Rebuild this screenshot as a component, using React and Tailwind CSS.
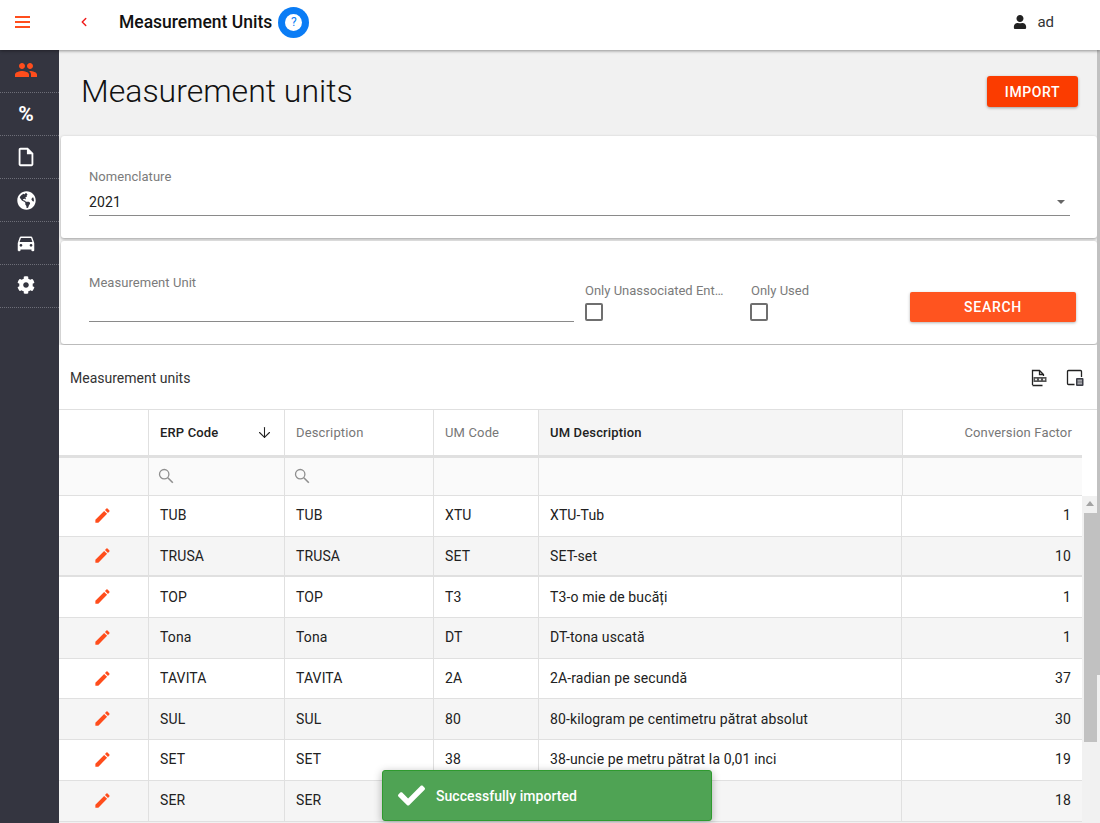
import { ArrowDown, ChevronLeft } from 'lucide-react';
import { FaCheck, FaCog, FaGlobeAmericas, FaUser } from 'react-icons/fa';
import { MdDirectionsCar, MdEdit, MdOutlineInsertDriveFile, MdPeople } from 'react-icons/md';

const rows = [
	['TUB', 'TUB', 'XTU', 'XTU-Tub', '1'],
	['TRUSA', 'TRUSA', 'SET', 'SET-set', '10'],
	['TOP', 'TOP', 'T3', 'T3-o mie de bucăți', '1'],
	['Tona', 'Tona', 'DT', 'DT-tona uscată', '1'],
	['TAVITA', 'TAVITA', '2A', '2A-radian pe secundă', '37'],
	['SUL', 'SUL', '80', '80-kilogram pe centimetru pătrat absolut', '30'],
	['SET', 'SET', '38', '38-uncie pe metru pătrat la 0,01 inci', '19'],
	['SER', 'SER', '', '', '18'],
];

const grid = 'grid grid-cols-[89px_136px_149px_105px_364px_180px]';
const rowGrid = 'grid grid-cols-[89px_136px_149px_105px_363px_181px]';
const cell = 'border-l border-[#e0e0e0] px-[11px] flex items-center min-w-0';
const headCell = `${cell} tracking-[0.15px]`;

const navItems = [
	{ icon: <MdPeople size={24} className="mb-[2px]" />, active: true },
	{ icon: <span className="text-[21px] font-bold leading-none">%</span> },
	{ icon: <MdOutlineInsertDriveFile size={22} /> },
	{ icon: <FaGlobeAmericas size={19} /> },
	{ icon: <MdDirectionsCar size={22} /> },
	{ icon: <FaCog size={18} className="mb-[2px]" /> },
];

const SearchIcon = () => (
	<svg width="16" height="16" viewBox="0 0 16 16" fill="none" className="mb-[2px] ml-[-2px] text-[#8f8f8f]">
		<circle cx="6.2" cy="6.2" r="4.7" stroke="currentColor" strokeWidth="1.3" />
		<path d="M9.8 9.8l5 5" stroke="currentColor" strokeWidth="1.6" />
	</svg>
);

const App = () => {
	return (
		<div className="relative h-[823px] w-[1100px] overflow-hidden bg-white text-[14px] text-[#212121] font-['Roboto',sans-serif]">
			<header className="relative z-20 flex h-[50px] items-center bg-white pb-[6px] shadow-[0_1px_3px_rgba(0,0,0,0.4)]">
				<div className="ml-[15px] flex w-[15px] flex-col gap-[3px]">
					<span className="h-[2px] bg-[#ff4d1c]" />
					<span className="h-[2px] bg-[#ff4d1c]" />
					<span className="h-[2px] bg-[#ff4d1c]" />
				</div>
				<ChevronLeft size={14} strokeWidth={2.5} className="ml-[47px] text-[#f01c1c]" />
				<h1 className="ml-[28px] text-[17.5px] font-medium text-[#111]">Measurement Units</h1>
				<div className="ml-[6px] flex h-[31px] w-[31px] items-center justify-center rounded-full bg-[#0a7cf5]">
					<span className="flex h-[17px] w-[17px] items-center justify-center rounded-full bg-white text-[12px] text-[#0a7cf5]">?</span>
				</div>
				<FaUser size={14} className="ml-auto text-[#222]" />
				<span className="ml-[10px] mr-[46px] text-[15px] text-[#333]">ad</span>
			</header>

			<div className="flex h-[773px]">
				<nav className="w-[59px] shrink-0 bg-[#343540]">
					{navItems.map((item, i) => (
						<div
							key={i}
							className={`flex h-[43px] items-center justify-center border-b border-dotted border-[#6d6e78] pr-[7px] ${item.active ? 'text-[#ff4d1c]' : 'text-white'}`}
						>
							{item.icon}
						</div>
					))}
				</nav>

				<main className="min-w-0 flex-1 bg-[#f1f1f1]">
					<div className="flex h-[86px] items-center justify-between pb-[3px] pl-[22px] pr-[22px]">
						<h2 className="mb-[2px] text-[32px] font-light leading-none text-[#111]">Measurement units</h2>
						<button className="h-[31px] w-[91px] rounded-[3px] bg-[#fb3c00] pt-[1px] text-[14px] font-medium tracking-[0.6px] text-white shadow-[0_1px_3px_rgba(0,0,0,0.35)]">
							IMPORT
						</button>
					</div>

					<section className="mb-[3px] ml-[2px] mr-[3px] h-[102px] rounded-[3px] bg-white pl-[28px] pr-[27px] pt-[33px] shadow-[0_1px_3px_rgba(0,0,0,0.35)]">
						<div className="text-[13px] leading-[15px] tracking-[0.05px] text-[#7b7b7b]">Nomenclature</div>
						<div className="mt-[5px] flex h-[27px] items-center justify-between border-b border-[#8a8a8a] pr-[5px] tracking-[0.12px]">
							<span>2021</span>
							<span className="h-0 w-0 border-x-[4px] border-t-[4px] border-x-transparent border-t-[#666]" />
						</div>
					</section>

					<section className="ml-[2px] mr-[3px] flex h-[103px] rounded-[3px] bg-white pl-[28px] pr-[20px] shadow-[0_1px_3px_rgba(0,0,0,0.35)]">
						<div className="w-[485px] shrink-0 pt-[34px]">
							<div className="text-[13px] leading-[15px] tracking-[0.05px] text-[#7b7b7b]">Measurement Unit</div>
							<div className="mt-[31px] h-px bg-[#8a8a8a]" />
						</div>
						<div className="ml-[11px] w-[165px] shrink-0 pt-[42px]">
							<div className="w-[141px] truncate text-[13px] leading-[15px] text-[#7b7b7b]">Only Unassociated Entities</div>
							<div className="mt-[5px] h-[18px] w-[18px] rounded-[2px] border-2 border-[#6f6f6f]" />
						</div>
						<div className="w-[160px] shrink-0 pt-[42px]">
							<div className="pl-[1px] text-[13px] leading-[15px] text-[#7b7b7b]">Only Used</div>
							<div className="mt-[5px] h-[18px] w-[18px] rounded-[2px] border-2 border-[#6f6f6f]" />
						</div>
						<button className="mt-[51px] h-[30px] w-[166px] rounded-[2px] bg-[#ff541f] text-[14px] font-medium tracking-[0.7px] text-white shadow-[0_1px_3px_rgba(0,0,0,0.3)]">
							SEARCH
						</button>
					</section>

					<section className="relative mt-[1px] bg-white">
						<div className="flex h-[64px] items-center justify-between pl-[11px] pr-[16px] pt-[2px]">
							<span className="text-[14px] text-[#333]">Measurement units</span>
							<div className="flex items-center gap-[18px]">
								<svg width="18" height="18" viewBox="0 0 18 18" fill="none">
									<path d="M2.5 16V1.5h7l4 4V7M9.5 1.5v4h4M2.5 16.5h10" stroke="#222" strokeWidth="1.3" />
									<rect x="3.5" y="8" width="13" height="5" fill="#555" />
									<circle cx="6" cy="10.5" r="1" fill="#fff" />
									<circle cx="10" cy="10.5" r="1" fill="#fff" />
									<circle cx="14" cy="10.5" r="1" fill="#fff" />
								</svg>
								<svg width="18" height="18" viewBox="0 0 18 18" fill="none">
									<path d="M8.5 15.5H2.5a1 1 0 0 1-1-1v-12a1 1 0 0 1 1-1h12a1 1 0 0 1 1 1V8" stroke="#222" strokeWidth="1.3" />
									<rect x="10" y="9" width="7.5" height="8" rx="1" fill="#3b3d46" />
									<path d="M11.5 11.2h4.5M11.5 13h4.5M11.5 14.8h4.5" stroke="#fff" strokeWidth="0.8" />
								</svg>
							</div>
						</div>

						<div className={`${grid} h-[46px] border-t border-[#e0e0e0] text-[13px]`}>
							<div className="flex items-center" />
							<div className={`${headCell} justify-between font-medium text-[#222]`}>
								ERP Code
								<ArrowDown size={17} strokeWidth={1.5} className="text-[#222]" />
							</div>
							<div className={`${headCell} text-[#777]`}>Description</div>
							<div className={`${headCell} text-[#777]`}>UM Code</div>
							<div className={`${headCell} bg-[#f5f5f5] font-medium text-[#222]`}>UM Description</div>
							<div className={`${headCell} justify-end bg-white pr-[10px] text-[#777]`}>Conversion Factor</div>
						</div>
						<div className={`${grid} h-[41px] w-[1023px] border-t-[3px] border-b border-t-[#e0e0e0] border-b-[#e0e0e0] bg-[#fafafa]`}>
							<div />
							<div className={cell}><SearchIcon /></div>
							<div className={cell}><SearchIcon /></div>
							<div className={cell} />
							<div className={cell} />
							<div className={cell} />
						</div>

						{rows.map((row, i) => (
							<div
								key={i}
								className={`${rowGrid} h-[40.7px] w-[1023px] border-[#e0e0e0] tracking-[0.12px] ${i === 1 ? 'border-b-2' : 'border-b'} ${i % 2 ? 'bg-[#f5f5f5]' : 'bg-white'}`}
							>
								<div className="flex items-center justify-center pb-[1px] pr-[3px]">
									<MdEdit size={19} className="text-[#ff4d1c]" />
								</div>
								<div className={cell}>{row[0]}</div>
								<div className={cell}>{row[1]}</div>
								<div className={cell}>{row[2]}</div>
								<div className={cell}>{row[3]}</div>
								<div className={`${cell} justify-end`}>{row[4]}</div>
							</div>
						))}

						{/* table scrollbar */}
						<div className="absolute right-[3px] top-[151px] h-[400px] w-[15px] bg-[#f1f1f1]">
							<div className="mx-auto mt-[5px] h-0 w-0 border-x-[4px] border-b-[5px] border-x-transparent border-b-[#a3a3a3]" />
							<div className="ml-[2px] mt-[7px] h-[229px] w-[13px] bg-[#c1c1c1]" />
						</div>
					</section>
				</main>
			</div>

			{/* page scrollbar */}
			<div className="absolute right-0 top-[50px] h-[773px] w-[3px] bg-[#f1f1f1]">
				<div className="h-[625px] bg-[#c1c1c1]" />
			</div>

			<div className="absolute left-[382px] top-[770px] z-30 flex h-[51px] w-[330px] items-center rounded-[3px] border border-[#2e9a2e] bg-[#4fa354] pl-[15px] text-[14px] font-medium text-white shadow-[0_2px_8px_rgba(0,0,0,0.3)]">
				<FaCheck size={27} />
				<span className="ml-[11px] pt-[2px] tracking-[0.05px]">Successfully imported</span>
			</div>
		</div>
	);
};

export default App;
